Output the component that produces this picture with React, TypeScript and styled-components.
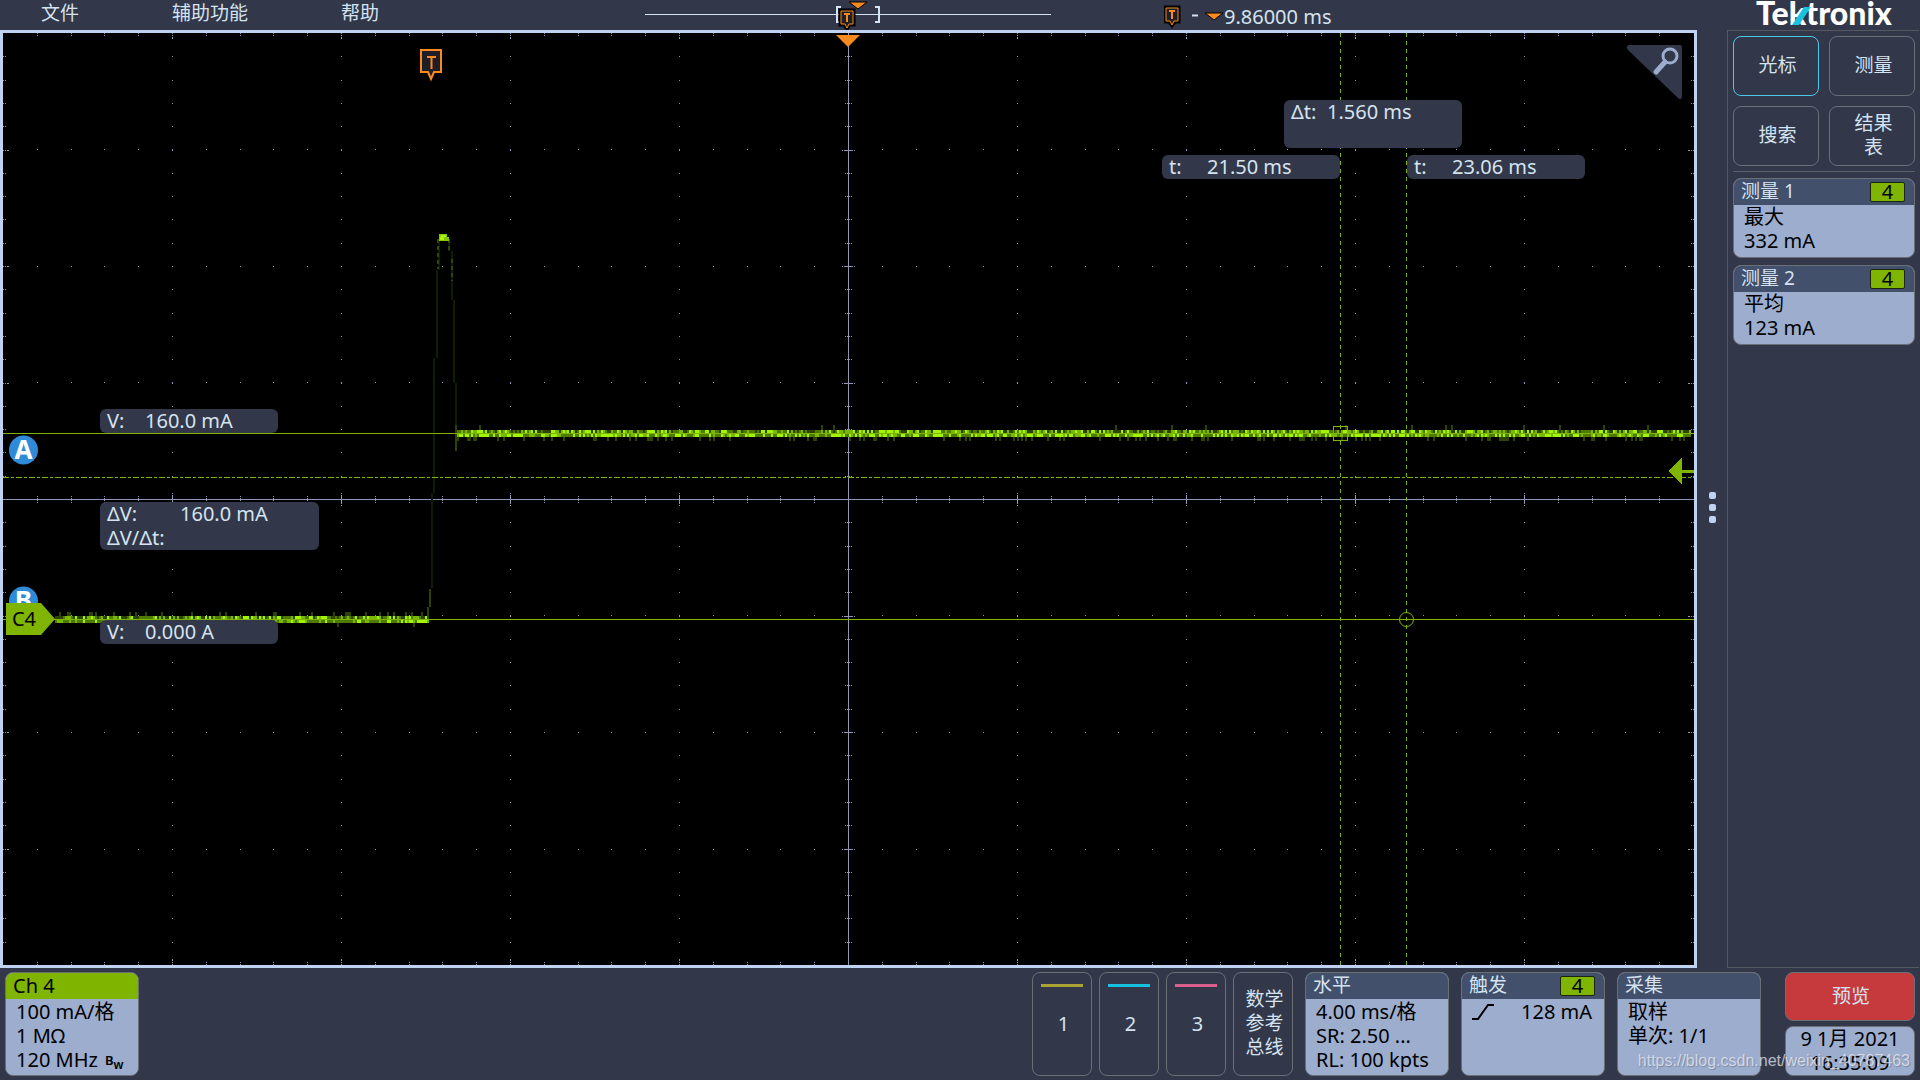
import React from "react";
import styled, { createGlobalStyle, css } from "styled-components";

const c = {
  bg: "#323749",
  frame: "#bfd2f2",
  line: "#6b6f76",
  head: "#42506b",
  body: "#9cadce",
  green: "#7fb400",
  orange: "#f78b1f",
  text: "#d5e3f0",
  axis: "#8f97b5",
};

const GlobalStyle = createGlobalStyle`
  *, *::before, *::after { box-sizing: border-box; }
  body {
    margin: 0;
    background: ${c.bg};
    color: ${c.text};
    font: 20px/24px "Noto Sans", "Noto Sans CJK SC", sans-serif;
  }
  button { font: inherit; color: inherit; padding: 0; cursor: pointer; }
`;

const Screen = styled.div`
  display: grid;
  grid-template-rows: 30px 1fr auto;
  min-height: 100vh;
`;

const TopBar = styled.header`
  display: grid;
  grid-template-columns: 645fr 406fr 113fr 563fr 193px;
  align-items: center;
`;

const Menu = styled.nav`
  display: flex;
  gap: 93px;
  padding: 0 0 4px 41px;
`;

const MenuItem = styled.button`
  border: 0;
  background: none;
  font-size: 19px;
  line-height: 24px;
`;

const Timeline = styled.svg`
  grid-column: 2;
  display: block;
  width: 100%;
  height: 30px;
  overflow: visible;
`;

const Delay = styled.div`
  grid-column: 4;
  display: flex;
  align-items: center;
  height: 30px;
  padding-top: 4px;

  svg { display: block; margin-top: -4px; }
`;

const Brand = styled.svg`
  display: block;
  width: 138px;
  height: 30px;
  margin-left: 29px;
  overflow: visible;
  font: 900 32px Lato, sans-serif;
`;

const Main = styled.main`
  display: grid;
  grid-template-columns: 1fr 30px 193px;
`;

const Scope = styled.section`
  position: relative;
  border: 3px solid ${c.frame};
  background: #000;
  overflow: hidden;
`;

const Plot = styled.svg`
  position: absolute;
  inset: 0;
  width: 100%;
  height: 100%;
`;

/* Cursor labels float over the plot, anchored in plot coordinates. */
const Readout = styled.dl<{ $x: number; $y: number; $w: number; $label: number; $tall?: boolean }>`
  position: absolute;
  left: calc(${(p) => p.$x} / 1691 * 100%);
  top: calc(${(p) => p.$y} / 932 * 100%);
  display: grid;
  grid-template-columns: ${(p) => p.$label}px 1fr;
  align-content: start;
  width: ${(p) => p.$w}px;
  min-height: ${(p) => (p.$tall ? 48 : 24)}px;
  margin: 0;
  padding-left: 7px;
  border-radius: 6px;
  background: ${c.bg};

  dt { white-space: nowrap; }
  dd { margin: 0; white-space: nowrap; }
`;

const DragHandle = styled.button`
  display: flex;
  flex-direction: column;
  align-items: center;
  justify-content: center;
  gap: 5px;
  padding-top: 16px;
  border: 0;
  background: none;

  i {
    width: 7px;
    height: 7px;
    border-radius: 2px;
    background: ${c.frame};
  }
`;

const Sidebar = styled.aside`
  margin-right: 1px;
  padding: 5px 4px 5px 5px;
  border: solid #55585e;
  border-width: 1px 0 1px 1px;
`;

const ToolGrid = styled.div`
  display: grid;
  grid-template-columns: 1fr 1fr;
  gap: 10px;
  padding-bottom: 5px;
  border-bottom: 1px solid #5d6169;
`;

const outlined = css`
  border: 1px solid ${c.line};
  border-radius: 8px;
`;

const ToolButton = styled.button<{ $active?: boolean }>`
  ${outlined}
  height: 60px;
  background: none;
  border-color: ${(p) => (p.$active ? "#4cc8e8" : c.line)};
  font-size: 19px;
  padding: 0 0 3px 3px;
`;

const Card = styled.section<{ $w?: number }>`
  ${outlined}
  width: ${(p) => (p.$w ? `${p.$w}px` : "auto")};
  background: ${c.body};
  color: #000;
  overflow: hidden;
`;

const CardHead = styled.h2<{ $channel?: boolean }>`
  display: flex;
  align-items: center;
  justify-content: space-between;
  height: 26px;
  margin: 0;
  padding: ${(p) => (p.$channel ? "0 9px 0 7px" : "0 9px 2px 7px")};
  background: ${(p) => (p.$channel ? c.green : c.head)};
  color: ${(p) => (p.$channel ? "#000" : c.text)};
  font-size: ${(p) => (p.$channel ? 20 : 19)}px;
  font-weight: 400;
`;

const Badge = styled.span`
  width: 35px;
  height: 20px;
  margin-top: 2px;
  border: 1px solid #1b2410;
  border-radius: 2px;
  background: ${c.green};
  color: #000;
  font-size: 20px;
  line-height: 18px;
  text-align: center;
`;

const CardBody = styled.div`
  padding: 0 12px 0 10px;
  white-space: nowrap;
`;

const MeasureCards = styled.div`
  display: grid;
  gap: 7px;
  margin-top: 6px;

  ${Card} { height: 80px; }
`;

const Level = styled.div`
  display: flex;
  align-items: center;
  justify-content: space-between;
`;

const Bandwidth = styled.span`
  display: inline-flex;
  margin-left: 7px;
  font-size: 13px;
  font-weight: 600;
  line-height: 13px;
  vertical-align: 2px;

  sub { font-size: 12px; line-height: 13px; padding-top: 4px; vertical-align: baseline; }
`;

const BottomBar = styled.footer`
  position: relative;
  display: flex;
  align-items: stretch;
  padding: 4px 5px;
  height: 112px;

  ${CardBody} { padding-top: 1px; }
`;

const Group = styled.div<{ $gap: number; $before?: string }>`
  display: flex;
  gap: ${(p) => p.$gap}px;
  margin-left: ${(p) => p.$before ?? "0"};
`;

const SourceButton = styled.button`
  ${outlined}
  width: 60px;
  background: none;
  font-size: 19px;
  padding: 0 0 3px 3px;
`;

const ChannelButton = styled(SourceButton)<{ $color: string }>`
  display: flex;
  flex-direction: column;
  align-items: center;
  justify-content: flex-start;
  font-size: 20px;
  padding: 11px 0 0;

  &::before {
    content: "";
    width: 42px;
    height: 3px;
    margin-bottom: 25px;
    background: ${(p) => p.$color};
  }

  span { padding-left: 3px; }
`;

const StatusColumn = styled.div`
  display: grid;
  grid-template-rows: 49px 50px;
  gap: 5px;
  width: 130px;
  margin-left: 24px;
`;

const PreviewButton = styled.button`
  ${outlined}
  background: #c63a3d;
  font-size: 19px;
  padding: 0 0 2px 2px;
`;

const Clock = styled.time`
  ${outlined}
  background: ${c.body};
  color: #000;
  text-align: center;
`;

const Watermark = styled.a`
  position: absolute;
  right: 10px;
  bottom: 7px;
  color: rgba(235, 238, 245, 0.72);
  font: 16px/24px "Liberation Sans", sans-serif;
  text-decoration: none;
  text-shadow: 1px 1px 1px rgba(80, 85, 100, 0.4);
`;

/* ---------- plot drawing ---------- */

const COLS = Array.from({ length: 9 }, (_, i) => 169 * (i + 1));
const ROWS = [116, 233, 349, 466, 582, 699, 816];
const X_TICKS = Array.from({ length: 50 }, (_, i) => Math.round(i * 33.8)).slice(1);
const Y_TICKS = Array.from({ length: 40 }, (_, i) => Math.round(i * 23.3)).slice(1);

function graticulePath() {
  let d = "";
  const dot = (x: number, y: number) => { d += `M${x} ${y}h1v1h-1z`; };
  COLS.forEach((x) => Y_TICKS.forEach((y) => dot(x, y)));
  ROWS.forEach((y) => X_TICKS.forEach((x) => dot(x, y)));
  X_TICKS.forEach((x, i) => {
    const major = (i + 1) % 5 === 0;
    (major ? [0, 2, 4, 5] : [0, 2]).forEach((o) => { dot(x, o); dot(x, 931 - o); });
    const r = major ? 4 : 1;
    d += `M${x} ${466 - r}h1v${r * 2 + 1}h-1z`;
    dot(x, 466 - r - 2);
    dot(x, 466 + r + 2);
  });
  Y_TICKS.forEach((y, i) => {
    const major = (i + 1) % 5 === 0;
    (major ? [0, 2, 4, 5] : [0, 2]).forEach((o) => { dot(o, y); dot(1690 - o, y); });
    const r = major ? 4 : 1;
    d += `M${845 - r} ${y}h${r * 2 + 1}v1h-${r * 2 + 1}z`;
    dot(845 - r - 2, y);
    dot(845 + r + 2, y);
  });
  return d;
}

function makeRandom(seed: number) {
  let s = seed;
  return () => {
    s = (s * 1664525 + 1013904223) % 4294967296;
    return s / 4294967296;
  };
}

const SHADES = ["#2c4400", "#4f7a00", "#78b800", "#a2f500"];

function noisePaths(from: number, to: number, y: number, down: boolean, seed: number) {
  const rnd = makeRandom(seed);
  const out = ["", "", "", ""];
  for (let x = from; x < to; x += 2) {
    const upper = Math.floor(rnd() * 4);
    const lower = Math.max(1, Math.floor(rnd() * 5) - (down ? 0 : 1));
    out[upper] += `M${x} ${y - 3}h2v3h-2z`;
    out[Math.min(3, lower)] += `M${x} ${y + 1}h2v3h-2z`;
    const k = rnd();
    if (k < 0.16) out[0] += down ? `M${x} ${y + 4}h2v4h-2z` : `M${x} ${y - 7}h2v4h-2z`;
    if (k > 0.985) out[0] += down ? `M${x} ${y - 8}h2v5h-2z` : `M${x} ${y + 4}h2v4h-2z`;
  }
  return out;
}

const GRATICULE = graticulePath();
const BEFORE = noisePaths(52, 426, 586, false, 11);
const AFTER = noisePaths(454, 1688, 400, true, 47);

const Trace = ({ layers }: { layers: string[] }) => (
  <>
    {layers.map((d, i) => <path key={i} d={d} fill={SHADES[i]} />)}
  </>
);

const ScopePlot = () => (
  <Plot viewBox="0 0 1691 932" preserveAspectRatio="none" shapeRendering="crispEdges" aria-label="C4">
    <path d={GRATICULE} fill={c.axis} />
    <path d="M0 466h1691v1H0zM845 0h1v932h-1z" fill={c.axis} />
    <Trace layers={BEFORE} />
    <Trace layers={AFTER} />
    <g fill="none" stroke="#0f1d00" strokeWidth="2">
      <path d="M429 555V460M431 460V325M434 325V237M436 237V208M446 208V218M449 218V267M451 267V350M453 350V392" />
      <path d="M425 586v-12M427 574v-18M453 392v26" stroke="#2c4400" />
      <path d="M435 206v30M446 206v14M449 226v22" stroke="#2f4a00" strokeDasharray="4 3" />
    </g>
    <path d="M436 201h8v3h2v4h-10z" fill="#7fc800" />
    <path d="M438 202h5v2h-2v3h-4v-3h1z" fill="#a8f510" />
    <g fill="none" stroke={c.green} strokeWidth="1">
      <path d="M0 400.5h1691M0 586.5h1691" />
      <path d="M0 444.5h1691" strokeDasharray="6 2 3 2" />
      <path d="M1337.5 0v932M1403.5 0v932" strokeDasharray="4 4" />
      <path d="M1330.500 393.500h14v14h-14z" />
    </g>
    <circle cx="1403.500" cy="586.500" r="7" fill="none" stroke={c.green} shapeRendering="auto" />
    <path d="M1665 438l14-13v12h12v3h-12v11z" fill={c.green} />
    <g shapeRendering="auto">
      <path d="M833 2h24l-12 12z" fill={c.orange} />
      <path d="M418 17h20v22h-7l-3 7-3-7h-7z" fill="#1f1d26" stroke={c.orange} strokeWidth="2" />
      <path d="M424 24h9M428.500 24v12" stroke={c.orange} strokeWidth="2" />
      <path d="M1626 12h51a2 2 0 0 1 2 2v50q-1 4-4 1L1625 17q-3-4 1-5z" fill={c.bg} />
      <ellipse cx="1667" cy="23" rx="7" ry="7" fill="none" stroke={c.body} strokeWidth="3" />
      <path d="M1662 29l-9 10" stroke={c.body} strokeWidth="5" strokeLinecap="round" />
      <g fontFamily="Noto Sans, sans-serif" textAnchor="middle">
        <circle cx="20.500" cy="417" r="14.500" fill="#2f8bd8" />
        <text x="20.500" y="426" fontSize="26" fontWeight="700" fill="#fff">A</text>
        <circle cx="20.500" cy="568" r="14.500" fill="#2f8bd8" />
        <text x="20.500" y="577" fontSize="26" fontWeight="700" fill="#fff">B</text>
        <path d="M3 570h35l14 16-14 16H3z" fill={c.green} />
        <text x="21" y="593" fontSize="20" fill="#000">C4</text>
      </g>
    </g>
  </Plot>
);

const TriggerFlag = ({ x, y }: { x: number; y: number }) => (
  <g transform={`translate(${x} ${y})`}>
    <path d="M1 1h14v15h-4l-3 4-3-4H1z" fill="#1f1d26" stroke="#000" strokeWidth="3" />
    <path d="M2 2h12v13h-4l-2 4-2-4H2z" fill="#1f1d26" stroke={c.orange} />
    <path d="M5 5h6M8 5v8" fill="none" stroke={c.orange} strokeWidth="2" />
  </g>
);

const MEASUREMENTS = [
  { title: "测量 1", kind: "最大", value: "332 mA" },
  { title: "测量 2", kind: "平均", value: "123 mA" },
];

const CHANNELS = [
  { name: "1", color: "#aaa436" },
  { name: "2", color: "#17c0de" },
  { name: "3", color: "#d9608c" },
];

export default function App() {
  return (
    <>
      <GlobalStyle />
      <Screen>
        <TopBar>
          <Menu>
            <MenuItem>文件</MenuItem>
            <MenuItem>辅助功能</MenuItem>
            <MenuItem>帮助</MenuItem>
          </Menu>
          <Timeline viewBox="0 0 406 30" aria-hidden="true">
            <path d="M0 14.500h406" stroke={c.text} />
            <path d="M196 7h-4v15h4M230 7h4v15h-4" fill="none" stroke={c.text} strokeWidth="2" />
            <path d="M204 2h18l-9 7z" fill={c.orange} stroke="#000" />
            <TriggerFlag x={194} y={9} />
          </Timeline>
          <Delay>
            <svg width="60" height="30" viewBox="0 0 60 30" aria-hidden="true">
              <TriggerFlag x={0} y={6} />
              <path d="M28 15.500h6" stroke={c.text} strokeWidth="2" />
              <path d="M41 13h18l-9 7z" fill={c.orange} stroke="#000" />
            </svg>
            <span>9.86000 ms</span>
          </Delay>
          <Brand viewBox="0 0 138 30">
            <text x="0" y="25" fill="#fff">Tektronix</text>
            <path d="M36 25L48 7h7L43 25z" fill="#19c3e0" />
          </Brand>
        </TopBar>

        <Main>
          <Scope>
            <ScopePlot />
            <Readout $x={1281} $y={67} $w={178} $label={36} $tall>
              <dt>Δt:</dt><dd>1.560 ms</dd>
            </Readout>
            <Readout $x={1159} $y={122} $w={178} $label={38}>
              <dt>t:</dt><dd>21.50 ms</dd>
            </Readout>
            <Readout $x={1404} $y={122} $w={178} $label={38}>
              <dt>t:</dt><dd>23.06 ms</dd>
            </Readout>
            <Readout $x={97} $y={376} $w={178} $label={38}>
              <dt>V:</dt><dd>160.0 mA</dd>
            </Readout>
            <Readout $x={97} $y={469} $w={219} $label={73} $tall>
              <dt>ΔV:</dt><dd>160.0 mA</dd>
              <dt>ΔV/Δt:</dt><dd />
            </Readout>
            <Readout $x={97} $y={587} $w={178} $label={38}>
              <dt>V:</dt><dd>0.000 A</dd>
            </Readout>
          </Scope>
          <DragHandle aria-label="⋮"><i /><i /><i /></DragHandle>
          <Sidebar>
            <ToolGrid>
              <ToolButton $active>光标</ToolButton>
              <ToolButton>测量</ToolButton>
              <ToolButton>搜索</ToolButton>
              <ToolButton>结果<br />表</ToolButton>
            </ToolGrid>
            <MeasureCards>
              {MEASUREMENTS.map((m) => (
                <Card key={m.title}>
                  <CardHead>{m.title}<Badge>4</Badge></CardHead>
                  <CardBody>{m.kind}<br />{m.value}</CardBody>
                </Card>
              ))}
            </MeasureCards>
          </Sidebar>
        </Main>

        <BottomBar>
          <Card $w={134}>
            <CardHead $channel>Ch 4</CardHead>
            <CardBody>
              100 mA/格<br />
              1 MΩ<br />
              120 MHz<Bandwidth>B<sub>w</sub></Bandwidth>
            </CardBody>
          </Card>
          <Group $gap={7} $before="auto">
            {CHANNELS.map((ch) => (
              <ChannelButton key={ch.name} $color={ch.color}><span>{ch.name}</span></ChannelButton>
            ))}
            <SourceButton>数学<br />参考<br />总线</SourceButton>
          </Group>
          <Group $gap={12} $before="12px">
            <Card $w={144}>
              <CardHead>水平</CardHead>
              <CardBody>4.00 ms/格<br />SR: 2.50 ...<br />RL: 100 kpts</CardBody>
            </Card>
            <Card $w={144}>
              <CardHead>触发<Badge>4</Badge></CardHead>
              <CardBody>
                <Level>
                  <svg width="22" height="18" viewBox="0 0 22 18" aria-hidden="true">
                    <path d="M0 16h6L16 2h6" fill="none" stroke="#000" strokeWidth="2" />
                  </svg>
                  128 mA
                </Level>
              </CardBody>
            </Card>
            <Card $w={144}>
              <CardHead>采集</CardHead>
              <CardBody>取样<br />单次: 1/1</CardBody>
            </Card>
          </Group>
          <StatusColumn>
            <PreviewButton>预览</PreviewButton>
            <Clock dateTime="2021-01-09T16:35:09">9 1月 2021<br />16:35:09</Clock>
          </StatusColumn>
          <Watermark href="https://blog.csdn.net/weixin_40787463">https://blog.csdn.net/weixin_40787463</Watermark>
        </BottomBar>
      </Screen>
    </>
  );
}
